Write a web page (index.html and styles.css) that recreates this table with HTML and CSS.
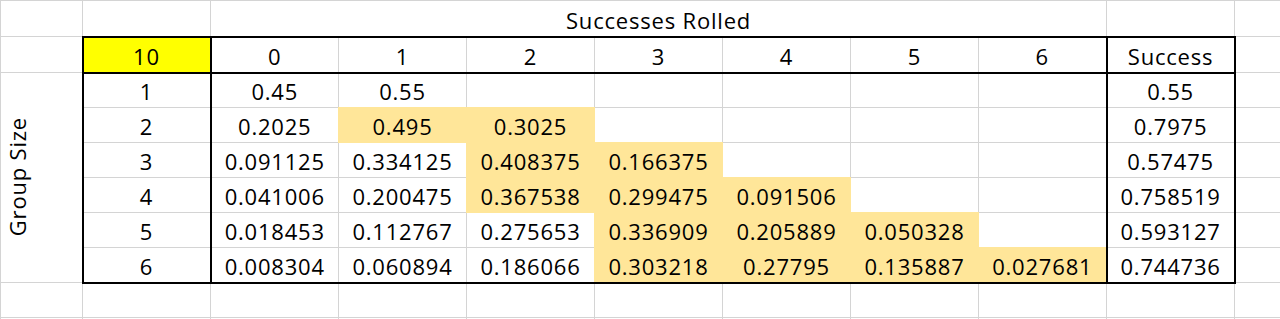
FILE: index.html
```html
<!DOCTYPE html>
<html lang="en">
<head>
<meta charset="utf-8">
<title>Successes Rolled</title>
<link rel="stylesheet" href="styles.css">
</head>
<body>
<table class="sheet">
  <colgroup>
    <col class="col-a">
    <col class="col-n"><col class="col-n"><col class="col-n"><col class="col-n"><col class="col-n">
    <col class="col-n"><col class="col-n"><col class="col-n"><col class="col-n">
    <col class="col-k">
  </colgroup>
  <tr class="row-tall">
    <td></td><td></td><td colspan="7">Successes Rolled</td><td></td><td></td>
  </tr>
  <tr class="row-tall">
    <td></td>
    <td class="head side corner">10</td>
    <td class="head">0</td><td class="head">1</td><td class="head">2</td><td class="head">3</td>
    <td class="head">4</td><td class="head">5</td><td class="head">6</td>
    <td class="head side">Success</td>
    <td></td>
  </tr>
  <tr>
    <td rowspan="6" class="axis"><span class="vlabel">Group Size</span></td>
    <td class="side">1</td>
    <td>0.45</td><td>0.55</td><td></td><td></td><td></td><td></td><td></td>
    <td class="side">0.55</td>
    <td></td>
  </tr>
  <tr>
    <td class="side">2</td>
    <td>0.2025</td><td class="hl">0.495</td><td class="hl">0.3025</td><td></td><td></td><td></td><td></td>
    <td class="side">0.7975</td>
    <td></td>
  </tr>
  <tr>
    <td class="side">3</td>
    <td>0.091125</td><td>0.334125</td><td class="hl">0.408375</td><td class="hl">0.166375</td><td></td><td></td><td></td>
    <td class="side">0.57475</td>
    <td></td>
  </tr>
  <tr>
    <td class="side">4</td>
    <td>0.041006</td><td>0.200475</td><td class="hl">0.367538</td><td class="hl">0.299475</td><td class="hl">0.091506</td><td></td><td></td>
    <td class="side">0.758519</td>
    <td></td>
  </tr>
  <tr>
    <td class="side">5</td>
    <td>0.018453</td><td>0.112767</td><td>0.275653</td><td class="hl">0.336909</td><td class="hl">0.205889</td><td class="hl">0.050328</td><td></td>
    <td class="side">0.593127</td>
    <td></td>
  </tr>
  <tr class="row-last">
    <td class="side">6</td>
    <td>0.008304</td><td>0.060894</td><td>0.186066</td><td class="hl">0.303218</td><td class="hl">0.27795</td><td class="hl">0.135887</td><td class="hl">0.027681</td>
    <td class="side">0.744736</td>
    <td></td>
  </tr>
  <tr>
    <td></td><td></td><td></td><td></td><td></td><td></td><td></td><td></td><td></td><td></td><td></td>
  </tr>
  <tr>
    <td></td><td></td><td></td><td></td><td></td><td></td><td></td><td></td><td></td><td></td><td></td>
  </tr>
</table>
</body>
</html>
```
FILE: styles.css
```css
html, body {
  margin: 0;
  padding: 0;
  background: #ffffff;
  overflow: hidden;
}

.sheet {
  border-collapse: collapse;
  table-layout: fixed;
  width: 1314px;
  font-family: "Open Sans", Lato, "Liberation Sans", sans-serif;
  font-size: 22px;
  line-height: 22px;
  letter-spacing: 0.8px;
  color: #000000;
}

.col-a { width: 82px; }
.col-n { width: 128px; }
.col-k { width: 80px; }

.sheet tr { height: 35px; }
.sheet tr.row-tall { height: 36px; }

.sheet td {
  border: 1px solid #d4d4d4;
  padding: 0 2px 5px;
  text-align: center;
  vertical-align: bottom;
  white-space: nowrap;
  overflow: hidden;
}

.sheet td.hl {
  background: #ffe699;
  border: 1px double #ffe699;
}

.sheet td.corner {
  background: #ffff00;
}

.sheet td.head {
  border-top: 2px solid #000000;
  border-bottom: 2px solid #000000;
}

.sheet td.side {
  border-left: 2px solid #000000;
  border-right: 2px solid #000000;
}

.sheet tr.row-last td.side,
.sheet tr.row-last td:not(:last-child) {
  border-bottom: 2px solid #000000;
}

.sheet td.axis {
  text-align: left;
  vertical-align: middle;
  padding: 0 0 0 5px;
}

.vlabel {
  display: inline-block;
  writing-mode: vertical-rl;
  transform: rotate(180deg);
}
```
